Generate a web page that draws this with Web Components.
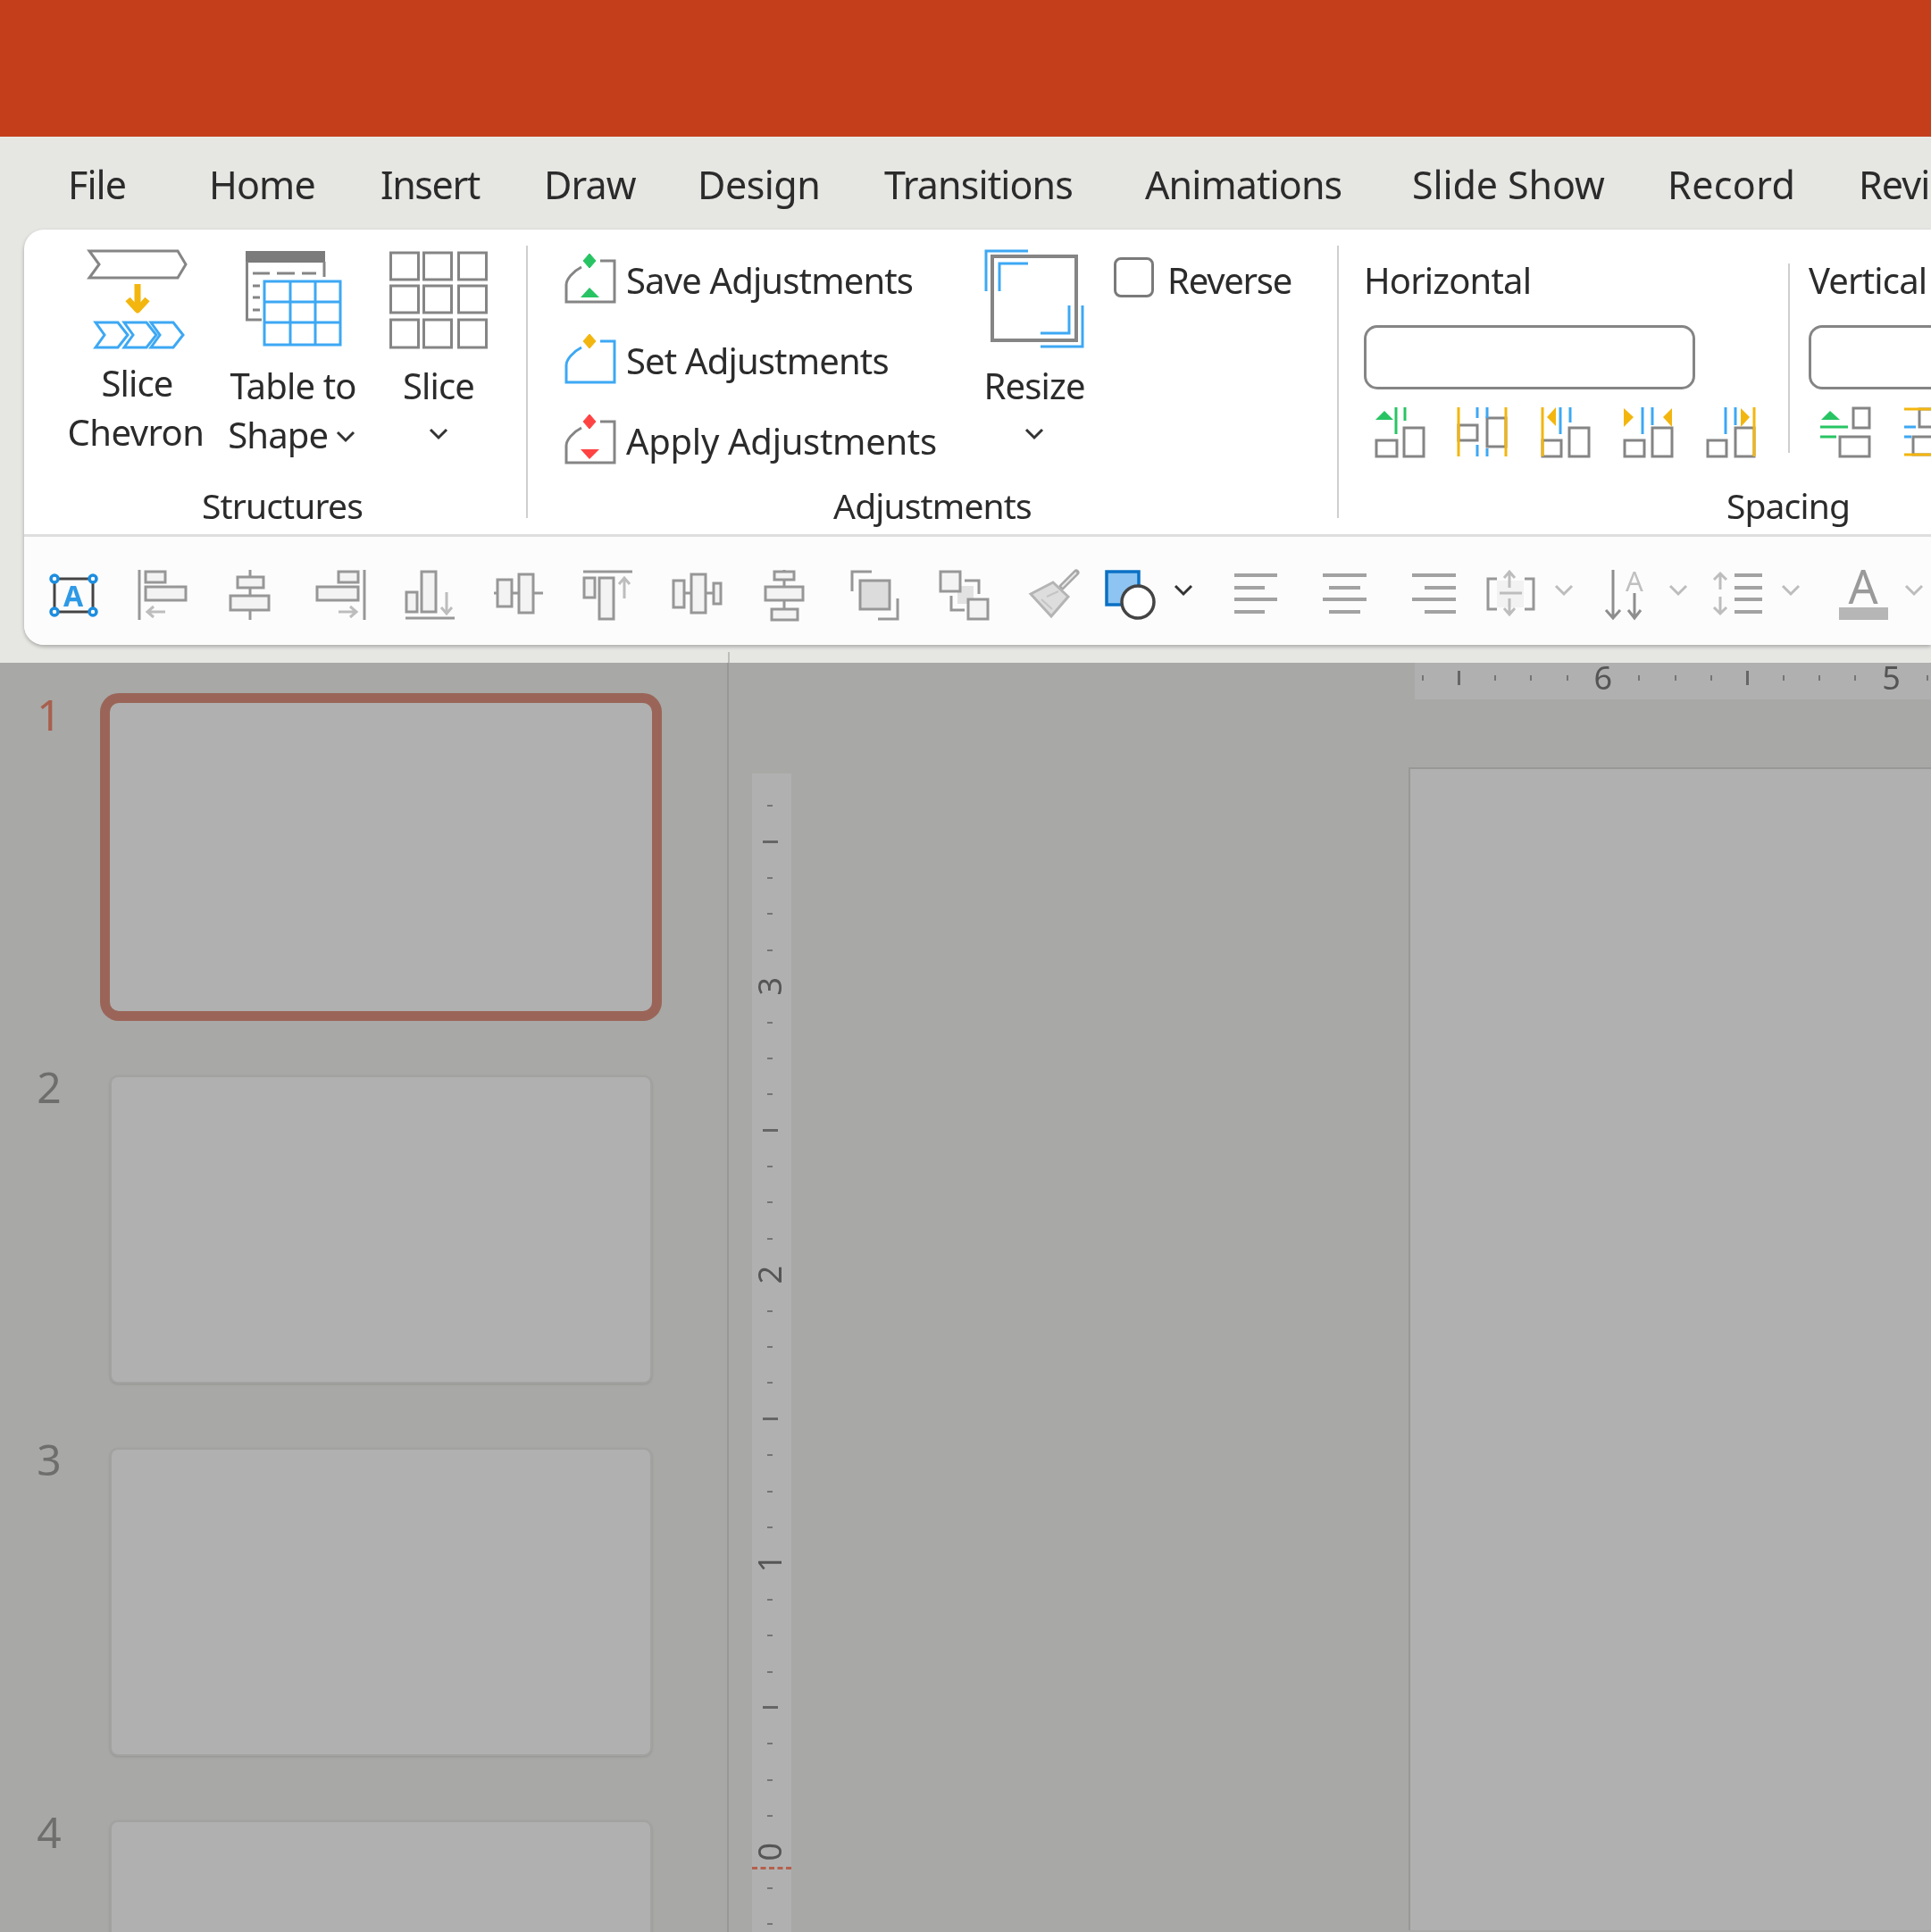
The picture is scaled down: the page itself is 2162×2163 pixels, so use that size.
<!DOCTYPE html>
<html lang="en"><head><meta charset="utf-8"><title>Ribbon</title>
<style>
html,body{margin:0;padding:0;width:2162px;height:2163px;overflow:hidden;background:#E6E7E3}
body{font-family:"Noto Sans","Open Sans",sans-serif;color:#2b2b2b}
</style></head>
<body>
<pp-app></pp-app>
<script>
const G='#858585',B='#3DA8F4',Y='#F3B60F',GR='#28C463',R='#FF4343',L='#BDBDBD',T='#979797',F='#F3F3F3';
const box=(x,y,w,h,f=F,s=T,sw=3)=>`<rect x="${x}" y="${y}" width="${w}" height="${h}" fill="${f}" stroke="${s}" stroke-width="${sw}"/>`;
const ln=(d,s=T,sw=3,extra='')=>`<path d="${d}" fill="none" stroke="${s}" stroke-width="${sw}" ${extra}/>`;
const tri=(p,f)=>`<polygon points="${p}" fill="${f}"/>`;
const adj=(s,d,t)=>ln('M39 9H55V55H1V36C1 30 8 21 18 16',s,3)+`<polygon points="27,1 34,9 27,17 20,9" fill="${d}" stroke="${d}" stroke-width="1" stroke-linejoin="round"/>`+t;
const txt=(x,y,size,fill,c)=>`<text x="${x}" y="${y}" font-family="Noto Sans,sans-serif" font-size="${size}" text-anchor="middle" fill="${fill}" font-weight="${c||400}">A</text>`;
const sRects=(a,b,c,d)=>box(a,37,b-a,18,'#fff',G)+box(c,23,d-c,32,'#fff',G);
const ICONS={
 chevron:ln('M1 2H100L109 17L100 32H1L12 17Z',G)+ln('M55 39V66',Y,7)+ln('M44 56L55 68L66 56',Y,7,'stroke-linejoin="round"')+
   [0,32,62].map(o=>ln(`M${8+o} 82H${33+o}L${44+o} 96L${33+o} 110H${8+o}L${18+o} 96Z`,B)).join(''),
 table:`<rect x="0" y="2" width="89" height="13" fill="#7b7b7b"/>`+ln('M1.5 14V79H18M88 14V31',G)+ln('M8 27H27M35 27H55M63 27H79M8 41H16M8 54H16M8 68H16',G)+
   box(21,36,85,71,'#fff',B)+ln('M50 36V107M78 36V107M21 59H106M21 82H106',B),
 slice:[[4,30],[41,30],[79,31]].map(([y,h])=>[1.5,38.5,77.5].map(x=>box(x,y,31,h,'none',G)).join('')).join(''),
 save:adj(G,GR,tri('17,50 38,50 27,39',GR)),
 set:adj(B,Y,''),
 apply:adj(G,R,tri('17,40 38,40 27,51',R)),
 resize:box(8,8,94,94,'none',G,4)+ln('M1 47V2H48M16 47V16H48M94 63V94H62M109 63V109H62',B),
 chev:ln('M1 1L10 10L19 1','#333',3),
 chevl:ln('M1 1L10 10L19 1',L,3),
 h1:tri('0,14 20,14 10,4',GR)+ln('M23 0V30M33 0V15',GR)+sRects(1,24,32,54),
 h2:box(1,20,21,17,'#fff',G)+box(33,12,21,32,'#fff',G)+ln('M1 0V55M54 0V55',Y)+ln('M22 0V12M22 42V55M33 0V12M33 46V55',B),
 h3:sRects(2,23,32,54)+ln('M2 0V55',Y)+tri('17,0 17,21 7,11',Y)+ln('M22 0V30M33 0V17',B),
 h4:sRects(1,23,32,54)+tri('0,1 11,11 0,22',Y)+tri('54,1 44,11 54,22',Y)+ln('M21 0V30M32 0V20',B),
 h5:sRects(1,22,32,53)+ln('M21 0V30M32 0V20',B)+tri('38,1 48,11 38,22',Y)+ln('M53 0V55',Y),
 v1:tri('1,14 22,14 11,4',GR)+ln('M0 22H31M0 33H18',GR)+box(37,1,18,22,'#fff',G)+box(22,33,33,22,'#fff',G),
 v2:box(17,2,40,20,'#fff',G)+box(10,33,40,20,'#fff',G)+ln('M0 2H60M0 53H60',Y)+ln('M0 22H13M0 33H8',B),
 abox:ln('M6 10H49V47H6Z','#444',3)+[[6,10],[49,10],[6,47],[49,47]].map(p=>`<circle cx="${p[0]}" cy="${p[1]}" r="4" fill="#fff" stroke="#1C8EE0" stroke-width="3.5"/>`).join('')+txt(27,41,32,'#2E9AE6',700),
 al:ln('M2 0V56')+box(9,2,22,12)+box(9,19,45,15)+ln('M31 47H11M18 41L11 47L18 53',L,3),
 ac:ln('M23 0V56')+box(9,8,29,12)+box(1,29,43,16),
 ar:ln('M54 0V56')+box(25,2,22,12)+box(1,19,46,15)+ln('M25 47H45M38 41L45 47L38 53',L,3),
 ab:ln('M0 54H55')+box(1,25,12,22)+box(18,2,16,45)+ln('M46 25V49M40 42L46 49L52 42',L,3),
 am:ln('M0 26H55')+box(4,11,16,30)+box(28,5,16,43),
 at:ln('M0 2H55')+box(1,9,12,22)+box(18,9,16,46)+ln('M46 32V9M40 16L46 9L52 16',L,3),
 dh:ln('M0 26H54')+box(1,12,12,30)+box(21,5,16,43)+box(46,15,8,23),
 dv:ln('M22 0V54')+box(11,2,22,9)+box(1,19,42,15)+box(8,44,29,12),
 grp:box(11,12,33,32,'#DCDCDC')+ln('M2 24V2H24M53 32V55H31'),
 ung:`<rect x="20" y="18" width="18" height="20" fill="#E2E2E2"/>`+box(1,2,22,22,F)+box(32,33,22,22,F)+ln('M28 12H44V27M13 29V45H28'),
 brush:ln('M53 3L37 19','#A8A8A8',7,'stroke-linecap="round"')+ln('M53 3L37 19','#E8E8E8',2)+
   `<polygon points="2,27 27,14 44,30 25,52" fill="#DDD" stroke="#B4B4B4" stroke-width="3"/>`+ln('M20 30L33 24M14 33L26 44','#C4C4C4',2),
 shape:`<rect x="2" y="2" width="36" height="37" fill="#8DC4F2" stroke="#0A70C4" stroke-width="3.5"/><circle cx="37" cy="36" r="18" fill="#fff" stroke="#444" stroke-width="3.5"/>`,
 tl:ln('M0 6H48M0 20H34M0 33H48M0 47H34','#A2A2A2',4),
 tc:ln('M0 6H49M7 20H42M0 33H49M7 47H42','#A2A2A2',4),
 tr:ln('M0 6H49M14 20H49M0 33H49M14 47H49','#A2A2A2',4),
 tb:`<rect x="12" y="12" width="30" height="30" fill="#F2F2F2"/>`+ln('M12 10H2V44H12M43 10H53V44H43')+ln('M15 26H40',L)+ln('M26 20V2M20 9L26 2L32 9M26 32V50M20 43L26 50L32 43',L),
 aa:ln('M9 0V53M1 45L9 54L17 45','#8E8E8E',3)+txt(33,24,31,'#C0C0C0')+ln('M33 26V54M26 45L33 54L40 45','#8E8E8E',3),
 ls:ln('M9 22V4M2 11L9 4L16 11M9 30V49M2 42L9 49L16 42',L,3)+ln('M25 6H56M25 20H56M25 33H56M25 47H56','#A2A2A2',4),
 fa:txt(27,38,52,'#9A9A9A')+`<rect x="0" y="42" width="55" height="14" fill="#B6B6B6"/>`
};
function el(name,css,html='',init){
  const tpl=document.createElement('template');tpl.innerHTML=`<style>${css}</style>${html}`;
  customElements.define(name,class extends HTMLElement{
    constructor(){super();this.attachShadow({mode:'open'}).appendChild(tpl.content.cloneNode(true));}
    connectedCallback(){init&&init.call(this,this.shadowRoot);}
  });
}
el('pp-icon',':host{display:inline-block;line-height:0;flex:none}svg{overflow:visible;display:block}','',function(r){
  const w=this.getAttribute('w')||56,h=this.getAttribute('h')||56;
  const d=document.createElement('div');
  d.innerHTML=`<svg xmlns="http://www.w3.org/2000/svg" width="${w}" height="${h}" viewBox="0 0 ${w} ${h}">${ICONS[this.getAttribute('name')]}</svg>`;
  r.appendChild(d);
});
el('pp-titlebar',':host{display:block;height:153px;background:#C43E1C}');
el('pp-tabs',`:host{display:grid;height:104px;box-sizing:border-box;padding:2px 0 0 76px;align-items:center;
  grid-template-columns:158px 192px 183px 172px 209px 292px 299px 286px 214px 200px;font-size:43px;letter-spacing:-.9px;white-space:nowrap;overflow:hidden;color:#2b2b2b}`,
  '<slot></slot>');
el('pp-group',`:host{display:grid;grid-template-rows:289px 40px;flex:none;height:341px;box-sizing:border-box;padding-bottom:12px}
  .c{display:flex;min-width:0}.l{font-size:var(--fs-s);letter-spacing:var(--ls);line-height:40px;text-align:center;white-space:nowrap;padding-right:var(--rp,0)}`,
  '<div class="c"><slot></slot></div><div class="l"><slot name="label"></slot></div>');
el('pp-sep',':host{display:block;flex:none;width:2px;background:#CFCFCF;height:305px;margin-top:18px}');
el('pp-big',`:host{display:flex;flex-direction:column;align-items:center;flex:none;box-sizing:border-box;padding-top:22px;font-size:var(--fs);letter-spacing:var(--ls);line-height:55px;text-align:center;white-space:nowrap}
  .i{height:113px;display:flex;justify-content:center;align-items:flex-start}.t{margin-top:var(--mt,12px)}`,
  '<div class="i"><slot name="icon"></slot></div><div class="t"><slot></slot></div>');
el('pp-rows',':host{display:flex;flex-direction:column;flex:none;box-sizing:border-box;padding-top:13px}','<slot></slot>');
el('pp-row',`:host{display:flex;align-items:center;gap:12px;height:90px;font-size:var(--fs);letter-spacing:var(--ls);white-space:nowrap}
  ::slotted(pp-icon){margin-bottom:7px;margin-top:-1px}
  ::slotted(span){margin-top:-4px}`,'<slot></slot>');
el('pp-check',`:host{display:flex;flex:none;align-items:flex-start;gap:15px;font-size:var(--fs);letter-spacing:-1.25px;white-space:nowrap;padding-top:31px;height:60px;line-height:52px}
  .b{width:45px;height:45px;box-sizing:border-box;border:3px solid #7A7A7A;border-radius:8px;background:#fff}`,
  '<div class="b"></div><slot></slot>');
el('pp-field',`:host{display:flex;flex-direction:column;flex:none;box-sizing:border-box;padding-top:31px;font-size:var(--fs);letter-spacing:var(--ls);white-space:nowrap}
  .l{height:54px;line-height:52px}.f{height:72px;box-sizing:border-box;border:3px solid #858585;border-radius:15px;margin:22px 0 20px;background:#fff;width:var(--iw,371px)}
  .i{display:flex}`,'<div class="l"><slot name="label"></slot></div><div class="f"></div><div class="i"><slot></slot></div>');
el('pp-ribbon',`:host{display:block;margin-left:27px;border-radius:22px 0 0 22px;background:#fff;box-shadow:0 2px 4px rgba(0,0,0,.28);overflow:hidden;height:465px}
  .m{display:flex;height:341px;overflow:hidden}`,'<div class="m"><slot></slot></div><slot name="tools"></slot>');
el('pp-tools',`:host{display:flex;box-sizing:border-box;height:124px;padding-top:37px;background:#FCFCFC;border-top:3px solid #DEDEDE;overflow:hidden}`,'',function(r){
  const s=[['abox',55,55],['al',154,55],['ac',257,45],['ar',354,55],['ab',454,55],['am',553,55],['at',653,55],['dh',753,54],['dv',856,45],['grp',952,55],['ung',1052,55],['brush',1152,54],['shape',1237,56],['chev',1315,20],['tl',1382,48],['tc',1481,49],['tr',1581,49],['tb',1664,55],['chevl',1741,20],['aa',1797,46],['chevl',1869,20],['ls',1917,56],['chevl',1995,20],['fa',2059,55],['chevl',2133,20]];
  let p=27;const f=document.createDocumentFragment();
  for(const [n,l,w] of s){const i=document.createElement('pp-icon');i.setAttribute('name',n);i.setAttribute('w',w);
    i.style.marginLeft=(l-p)+'px';if(n.startsWith('chev')){i.setAttribute('h',12);i.style.marginTop='17px';}p=l+w;f.appendChild(i);}
  r.appendChild(f);
});
el('pp-strip',':host{display:flex;height:20px;align-items:flex-end;padding-left:815px}.d{width:2px;height:12px;background:#BDBEBB}','<div class="d"></div>');
el('pp-num',`:host{display:block;flex:none;width:123px;padding-right:13px;box-sizing:border-box;text-align:center;font-size:48px;line-height:50px;margin-top:-12px;color:#6E6E6C}
  :host([on]){color:#A8604E}`,'<slot></slot>');
el('pp-thumb',`:host{display:flex;flex:none;align-items:flex-start;height:345px}
  .s{width:607px;height:345px;box-sizing:border-box;background:#B0B0B0;border:2px solid #A2A2A1;border-radius:9px;box-shadow:0 1px 3px rgba(0,0,0,.12)}
  :host([on]) .s{border:0;box-shadow:0 0 0 11px #9A6558;border-radius:10px}`,
  '<pp-num></pp-num><div class="s"></div>',function(r){
    const n=r.querySelector('pp-num');n.textContent=this.getAttribute('n');if(this.hasAttribute('on'))n.setAttribute('on','');
  });
el('pp-panel',`:host{display:flex;flex-direction:column;gap:72px;flex:none;width:816px;box-sizing:border-box;padding-top:45px;border-right:2px solid #979997;overflow:hidden}`,'<slot></slot>');
el('pp-hruler',`:host{display:flex;flex:none;height:41px;margin-left:768px;background:#B0B0B0;overflow:hidden;align-items:center;color:#555;font-size:36px}
  .c{flex:none;width:40.35px;height:41px;display:flex;align-items:center;justify-content:center;margin-bottom:8px}
  .c:first-of-type{margin-left:-11px}
  .d{width:2px;height:6px;background:#757575}.b{width:3px;height:16px;background:#666}.n{line-height:41px}`,'',function(r){
  const seq=['d','b','d','d','d','6','d','d','d','b','d','d','d','5','d'];
  r.innerHTML+=seq.map(k=>`<div class="c">${k=='d'||k=='b'?`<div class="${k}"></div>`:`<span class="n">${k}</span>`}</div>`).join('');
});
el('pp-vruler',`:host{display:flex;flex-direction:column;position:relative;flex:none;width:44px;height:1300px;margin:7px 0 0 26px;background:#B0B0B0;box-sizing:border-box;padding-top:16px;overflow:hidden;color:#555;font-size:36px}
  .c{flex:none;height:40.4px;display:flex;align-items:center;justify-content:center;transform:translateX(-2px)}
  .d{width:6px;height:2px;background:#757575}.b{width:17px;height:3px;background:#666}
  .n{writing-mode:vertical-rl;transform:rotate(180deg);line-height:44px}
  .r{position:absolute;left:0;right:0;top:1224px;border-top:3px dashed #B5604C}`,'',function(r){
  const seq=['d','b','d','d','d','3','d','d','d','b','d','d','d','2','d','d','d','b','d','d','d','1','d','d','d','b','d','d','d','0','d','d','d'];
  r.innerHTML+=seq.map(k=>`<div class="c">${k=='d'||k=='b'?`<div class="${k}"></div>`:`<span class="n">${k}</span>`}</div>`).join('')+'<div class="r"></div>';
});
el('pp-canvas',`:host{display:flex;flex-direction:column;flex:1;min-width:0;overflow:hidden}
  .w{display:flex;flex:none;align-items:flex-start;margin-top:76px}
  .s{flex:1;margin-left:691px;height:1300px;background:#B0B0B0;border-top:2px solid #989897;border-left:2px solid #989897}`,
  '<pp-hruler></pp-hruler><div class="w"><pp-vruler></pp-vruler><div class="s"></div></div>');
el('pp-main',':host{display:flex;height:1421px;background:#A8A8A6;overflow:hidden}','<slot></slot>');
el('pp-app',`:host{display:block;width:2162px;height:2163px;overflow:hidden;--fs:40px;--fs-s:39px;--ls:-.85px;filter:blur(.55px)}`,`
  <pp-titlebar></pp-titlebar>
  <pp-tabs><span>File</span><span>Home</span><span style="letter-spacing:-1.4px">Insert</span><span>Draw</span><span style="letter-spacing:-.5px">Design</span><span>Transitions</span><span>Animations</span><span style="letter-spacing:-.1px">Slide Show</span><span style="letter-spacing:.4px">Record</span><span>Review</span></pp-tabs>
  <pp-ribbon>
    <pp-group style="width:562px;padding-left:45px;--rp:29px">
      <pp-big style="width:160px;--mt:9px"><pp-icon slot="icon" name="chevron" w="110" h="112" style="margin-left:4px"></pp-icon><span style="margin-left:3px">Slice</span><br><span style="letter-spacing:-.55px">Chevron</span></pp-big>
      <pp-big style="width:192px"><pp-icon slot="icon" name="table" w="106" h="110"></pp-icon>Table to<br>Shape <pp-icon name="chev" w="20" h="12" style="vertical-align:7px;margin-right:4px"></pp-icon></pp-big>
      <pp-big style="width:134px"><pp-icon slot="icon" name="slice" w="110" h="110"></pp-icon>Slice<br><pp-icon name="chev" w="20" h="12" style="vertical-align:10px"></pp-icon></pp-big>
      <span slot="label">Structures</span>
    </pp-group>
    <pp-sep></pp-sep>
    <pp-group style="width:906px;padding-left:42px;--rp:42px">
      <pp-rows style="width:453px">
        <pp-row><pp-icon name="save"></pp-icon><span>Save Adjustments</span></pp-row>
        <pp-row><pp-icon name="set"></pp-icon><span>Set Adjustments</span></pp-row>
        <pp-row><pp-icon name="apply"></pp-icon><span style="letter-spacing:-.3px">Apply Adjustments</span></pp-row>
      </pp-rows>
      <pp-big style="width:144px"><pp-icon slot="icon" name="resize" w="110" h="110"></pp-icon>Resize<br><pp-icon name="chev" w="20" h="12" style="vertical-align:10px"></pp-icon></pp-big>
      <pp-check style="margin-left:17px">Reverse</pp-check>
      <span slot="label">Adjustments</span>
    </pp-group>
    <pp-sep></pp-sep>
    <pp-group style="width:1008px;padding-left:28px;--rp:30px">
      <pp-field style="width:475px"><span slot="label">Horizontal</span>
        <pp-icon name="h1" style="margin-left:13px"></pp-icon>
        <pp-icon name="h2" style="margin-left:36px"></pp-icon>
        <pp-icon name="h3" style="margin-left:37px"></pp-icon>
        <pp-icon name="h4" style="margin-left:37px"></pp-icon>
        <pp-icon name="h5" style="margin-left:37px"></pp-icon>
      </pp-field>
      <pp-sep style="height:212px;margin:38px 0 0 0"></pp-sep>
      <pp-field style="margin-left:21px;--iw:371px;width:400px"><span slot="label">Vertical</span>
        <pp-icon name="v1" style="margin-left:13px"></pp-icon>
        <pp-icon name="v2" style="margin-left:38px"></pp-icon>
      </pp-field>
      <span slot="label">Spacing</span>
    </pp-group>
    <pp-tools slot="tools"></pp-tools>
  </pp-ribbon>
  <pp-strip></pp-strip>
  <pp-main>
    <pp-panel>
      <pp-thumb n="1" on></pp-thumb>
      <pp-thumb n="2"></pp-thumb>
      <pp-thumb n="3"></pp-thumb>
      <pp-thumb n="4"></pp-thumb>
    </pp-panel>
    <pp-canvas></pp-canvas>
  </pp-main>`);
</script>
</body></html>
